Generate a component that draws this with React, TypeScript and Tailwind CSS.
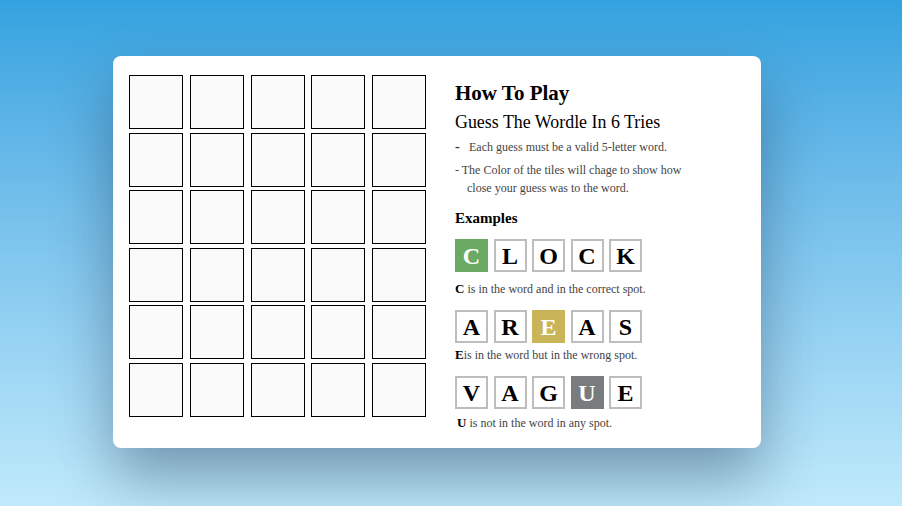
import React from 'react'

type Tile = { ch: string; tone?: 'green' | 'yellow' | 'gray' }

const examples: { tiles: Tile[]; key: string; note: string; gap: string }[] = [
  {
    tiles: [{ ch: 'C', tone: 'green' }, { ch: 'L' }, { ch: 'O' }, { ch: 'C' }, { ch: 'K' }],
    key: 'C',
    note: ' is in the word and in the correct spot.',
    gap: 'mt-[8px] mb-[12px]',
  },
  {
    tiles: [{ ch: 'A' }, { ch: 'R' }, { ch: 'E', tone: 'yellow' }, { ch: 'A' }, { ch: 'S' }],
    key: 'E',
    note: 'is in the word but in the wrong spot.',
    gap: 'mt-[3px] mb-[12px]',
  },
  {
    tiles: [{ ch: 'V' }, { ch: 'A' }, { ch: 'G' }, { ch: 'U', tone: 'gray' }, { ch: 'E' }],
    key: 'U',
    note: ' is not in the word in any spot.',
    gap: 'mt-[5px] pl-[2px]',
  },
]

const toneClass = (tone?: Tile['tone']) => {
  if (tone === 'green') return 'bg-[#6aaa64] text-white border-[#6aaa64]'
  if (tone === 'yellow') return 'bg-[#c9b458] text-white border-[#c9b458]'
  if (tone === 'gray') return 'bg-[#787c7e] text-white border-[#787c7e]'
  return 'bg-white text-black border-[#bdbdbd]'
}

const Board: React.FC = () => (
  <div className="grid grid-cols-[repeat(5,54px)] grid-rows-[repeat(6,54px)] gap-x-[6.75px] gap-y-[3.6px]">
    {Array.from({ length: 30 }).map((_, i) => (
      <div key={i} className="border-[1.5px] border-black bg-[#fafafa]" />
    ))}
  </div>
)

const HowToPlay: React.FC = () => (
  <div className="ml-[29px] mt-[1px] text-[#444]">
    <h1 className="text-[21px] font-bold leading-[34px] text-black">How To Play</h1>
    <h2 className="text-[17.9px] leading-[24px] text-black">Guess The Wordle In 6 Tries</h2>
    <div className="mt-[4px] text-[12px] leading-[18px]">
      <p className="flex">
        <span className="w-[14px] text-[14px] font-bold text-[#333]">-</span>
        <span>Each guess must be a valid 5-letter word.</span>
      </p>
      <p className="mt-[5px] w-[236px] pl-[12px] -indent-[12px]">
        - The Color of the tiles will chage to show how close your guess was to the word.
      </p>
    </div>
    <h3 className="mt-[10px] text-[15px] font-bold leading-[22px] text-black">Examples</h3>
    <div className="mt-[10px]">
      {examples.map((ex, r) => (
        <div key={r}>
          <div className="flex gap-[5.5px]">
            {ex.tiles.map((t, i) => (
              <div
                key={i}
                className={`flex h-[33px] w-[33px] items-center justify-center border-2 text-[24px] font-bold leading-none ${toneClass(t.tone)}`}
              >
                {t.ch}
              </div>
            ))}
          </div>
          <p className={`text-[12px] leading-[18px] ${ex.gap}`}>
            <span className="text-[13px] font-bold text-black">{ex.key}</span>
            {ex.note}
          </p>
        </div>
      ))}
    </div>
  </div>
)

export default function App() {
  return (
    <div
      className="h-[506px] w-full overflow-hidden bg-gradient-to-b from-[#32a2df] to-[#c0eafb] pt-[56px] pl-[113px]"
      style={{ fontFamily: '"Liberation Serif", "Times New Roman", serif' }}
    >
      <div className="flex h-[392px] w-[648px] rounded-[8px] bg-white pl-[16px] pt-[19px] shadow-[0_30px_60px_rgba(20,40,70,0.4)]">
        <Board />
        <HowToPlay />
      </div>
    </div>
  )
}
